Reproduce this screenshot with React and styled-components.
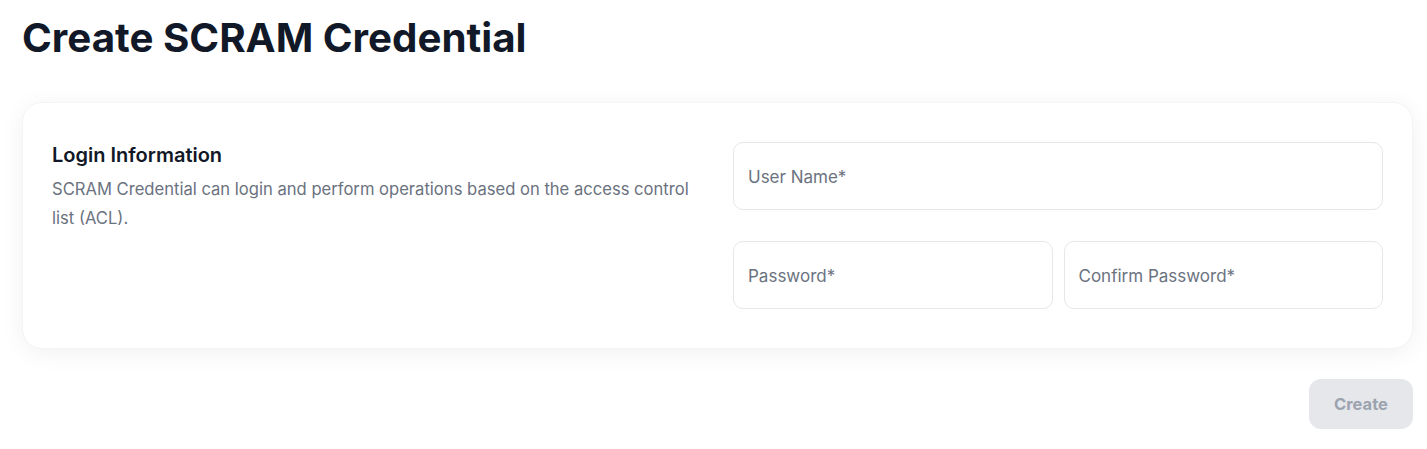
import styled, { createGlobalStyle } from "styled-components";

const GlobalStyle = createGlobalStyle`
  html, body {
    margin: 0;
    padding: 0;
    background: #ffffff;
    font-family: Inter, "Noto Sans", sans-serif;
  }
`;

const Page = styled.div`
  padding: 14px 14px 20px 22px;
  display: flex;
  flex-direction: column;
`;

const Title = styled.h1`
  margin: 0;
  font-size: 40.3px;
  line-height: 48px;
  font-weight: 700;
  color: #111827;
`;

const Card = styled.section`
  margin-top: 40px;
  background: #ffffff;
  border: 1px solid #f3f4f6;
  border-radius: 20px;
  box-shadow: 0 4px 24px rgba(17, 24, 39, 0.06);
  padding: 39px 29px;
  display: grid;
  grid-template-columns: 1fr 1fr;
  column-gap: 31px;
`;

const Info = styled.div`
  padding-top: 1px;
`;

const SectionTitle = styled.h2`
  margin: 0;
  font-size: 20px;
  line-height: 24px;
  font-weight: 600;
  color: #111827;
`;

const Description = styled.p`
  margin: 8px 0 0;
  font-size: 16.6px;
  line-height: 29px;
  color: #6b7280;
`;

const Fields = styled.div`
  display: flex;
  flex-direction: column;
  gap: 31px;
`;

const Row = styled.div`
  display: flex;
  gap: 11px;
`;

const Input = styled.input`
  flex: 1;
  min-width: 0;
  height: 68px;
  box-sizing: border-box;
  border: 1px solid #e5e7eb;
  border-radius: 10px;
  padding: 2px 14px 0;
  font-family: inherit;
  font-size: 17px;
  color: #111827;
  background: #ffffff;
  outline: none;

  &::placeholder {
    color: #6b7280;
  }
`;

const Footer = styled.div`
  display: flex;
  justify-content: flex-end;
  margin-top: 30px;
`;

const Button = styled.button`
  width: 104px;
  height: 50px;
  border: none;
  border-radius: 12px;
  background: #e5e7eb;
  color: #9ca3af;
  font-family: inherit;
  font-size: 16.5px;
  font-weight: 700;
  cursor: not-allowed;
`;

export default function App() {
  return (
    <>
      <GlobalStyle />
      <Page>
        <Title>Create SCRAM Credential</Title>
        <Card>
          <Info>
            <SectionTitle>Login Information</SectionTitle>
            <Description>
              SCRAM Credential can login and perform operations based on the
              access control list (ACL).
            </Description>
          </Info>
          <Fields>
            <Row>
              <Input placeholder="User Name*" />
            </Row>
            <Row>
              <Input type="password" placeholder="Password*" />
              <Input type="password" placeholder="Confirm Password*" />
            </Row>
          </Fields>
        </Card>
        <Footer>
          <Button disabled>Create</Button>
        </Footer>
      </Page>
    </>
  );
}
